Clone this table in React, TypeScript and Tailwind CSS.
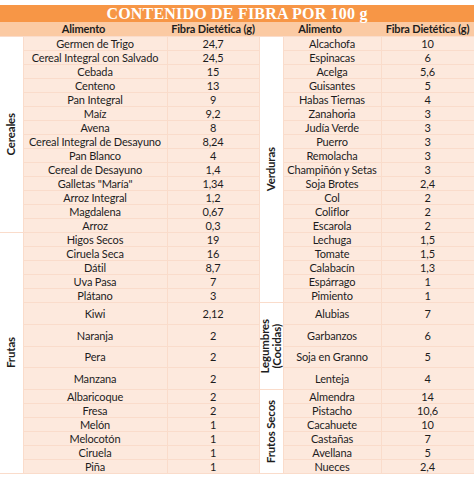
const rows: { l: [string, string]; r: [string, string]; h: number }[] = [
  { l: ["Germen de Trigo", "24,7"], r: ["Alcachofa", "10"], h: 14 },
  { l: ["Cereal Integral con Salvado", "24,5"], r: ["Espinacas", "6"], h: 14 },
  { l: ["Cebada", "15"], r: ["Acelga", "5,6"], h: 14 },
  { l: ["Centeno", "13"], r: ["Guisantes", "5"], h: 14 },
  { l: ["Pan Integral", "9"], r: ["Habas Tiernas", "4"], h: 14 },
  { l: ["Maíz", "9,2"], r: ["Zanahoria", "3"], h: 14 },
  { l: ["Avena", "8"], r: ["Judía Verde", "3"], h: 14 },
  { l: ["Cereal Integral de Desayuno", "8,24"], r: ["Puerro", "3"], h: 14 },
  { l: ["Pan Blanco", "4"], r: ["Remolacha", "3"], h: 14 },
  { l: ["Cereal de Desayuno", "1,4"], r: ["Champiñón y Setas", "3"], h: 14 },
  { l: ['Galletas "María"', "1,34"], r: ["Soja Brotes", "2,4"], h: 14 },
  { l: ["Arroz Integral", "1,2"], r: ["Col", "2"], h: 14 },
  { l: ["Magdalena", "0,67"], r: ["Coliflor", "2"], h: 14 },
  { l: ["Arroz", "0,3"], r: ["Escarola", "2"], h: 14 },
  { l: ["Higos Secos", "19"], r: ["Lechuga", "1,5"], h: 14 },
  { l: ["Ciruela Seca", "16"], r: ["Tomate", "1,5"], h: 14 },
  { l: ["Dátil", "8,7"], r: ["Calabacín", "1,3"], h: 14 },
  { l: ["Uva Pasa", "7"], r: ["Espárrago", "1"], h: 14 },
  { l: ["Plátano", "3"], r: ["Pimiento", "1"], h: 14 },
  { l: ["Kiwi", "2,12"], r: ["Alubias", "7"], h: 22 },
  { l: ["Naranja", "2"], r: ["Garbanzos", "6"], h: 22 },
  { l: ["Pera", "2"], r: ["Soja en Granno", "5"], h: 21 },
  { l: ["Manzana", "2"], r: ["Lenteja", "4"], h: 22 },
  { l: ["Albaricoque", "2"], r: ["Almendra", "14"], h: 14 },
  { l: ["Fresa", "2"], r: ["Pistacho", "10,6"], h: 14 },
  { l: ["Melón", "1"], r: ["Cacahuete", "10"], h: 14 },
  { l: ["Melocotón", "1"], r: ["Castañas", "7"], h: 14 },
  { l: ["Ciruela", "1"], r: ["Avellana", "5"], h: 14 },
  { l: ["Piña", "1"], r: ["Nueces", "2,4"], h: 14 },
];

const leftCats: Record<number, [string[], number]> = {
  0: [["Cereales"], 14],
  14: [["Frutas"], 15],
};
const rightCats: Record<number, [string[], number]> = {
  0: [["Verduras"], 19],
  19: [["Legumbres", "(Cocidas)"], 4],
  23: [["Frutos Secos"], 6],
};

const cell =
  "p-0 text-center align-middle whitespace-nowrap overflow-hidden bg-[#fde9dd] border border-[#fadccb]";

const CatCell = ({ lines, span }: { lines: string[]; span: number }) => (
  <td rowSpan={span} className="p-0 bg-white border-y border-[#fadccb] align-middle overflow-hidden">
    <div className="flex justify-center items-center">
      <div className="[writing-mode:vertical-rl] rotate-180 font-bold text-[11.5px] leading-[12px] text-center whitespace-nowrap">
        {lines.map((t) => (
          <div key={t}>{t}</div>
        ))}
      </div>
    </div>
  </td>
);

export default function App() {
  return (
    <div className="w-[474px] pt-[5px] font-['Lato','Liberation_Sans',sans-serif] text-[11px] tracking-[-0.15px] text-[#1d1d1d]">
      <table className="w-[474px] table-fixed border-collapse">
        <colgroup>
          <col className="w-[23px]" />
          <col className="w-[144px]" />
          <col className="w-[92px]" />
          <col className="w-[24px]" />
          <col className="w-[98px]" />
          <col className="w-[93px]" />
        </colgroup>
        <thead>
          <tr className="h-[17px]">
            <th
              colSpan={6}
              className="p-0 bg-[#f79646] text-white font-['Liberation_Serif',serif] font-bold text-[16px] leading-[17px] tracking-[0.2px] whitespace-nowrap"
            >
              CONTENIDO DE FIBRA POR 100 g
            </th>
          </tr>
          <tr className="h-[14px] bg-[#fbcaa3] font-bold leading-[14px] whitespace-nowrap">
            <th colSpan={2} className="p-0">Alimento</th>
            <th className="p-0">Fibra Dietética (g)</th>
            <th colSpan={2} className="p-0">Alimento</th>
            <th className="p-0">Fibra Dietética (g)</th>
          </tr>
        </thead>
        <tbody className="leading-[12px]">
          {rows.map((row, i) => (
            <tr key={i} style={{ height: row.h }}>
              {leftCats[i] && <CatCell lines={leftCats[i][0]} span={leftCats[i][1]} />}
              <td className={cell}>{row.l[0]}</td>
              <td className={cell}>{row.l[1]}</td>
              {rightCats[i] && <CatCell lines={rightCats[i][0]} span={rightCats[i][1]} />}
              <td className={cell}>{row.r[0]}</td>
              <td className={cell}>{row.r[1]}</td>
            </tr>
          ))}
        </tbody>
      </table>
    </div>
  );
}
